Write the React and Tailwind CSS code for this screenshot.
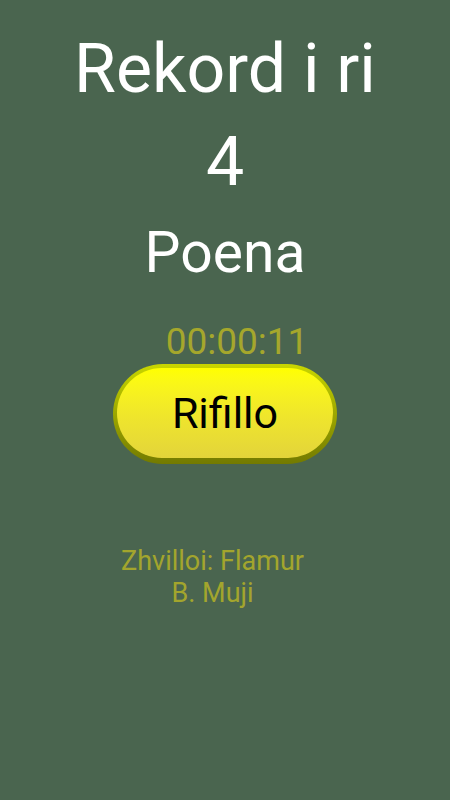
import React from 'react';

const font = {fontFamily: 'Roboto, "Noto Sans", sans-serif'};

export default function App() {
    return (
        <div className="w-full h-[800px] bg-[#4a654f] flex flex-col items-center" style={font}>
            {/* Titulli */}
            <h1 className="mt-[35px] text-[68px] leading-none text-white">Rekord i ri</h1>
            <div className="mt-[25px] text-[68px] leading-none text-white">4</div>
            <div className="mt-[28px] text-[57px] leading-none text-white">Poena</div>

            {/* Koha */}
            <div className="mt-[42px] w-full flex justify-center pl-[24px]">
                <span className="text-[37px] leading-none text-[#a5a72c]">00:00:11</span>
            </div>

            {/* Butoni */}
            <button className="mt-[4px] w-[224px] h-[100px] rounded-[50px] p-[4px] pb-[6px] bg-gradient-to-b from-[#c9d600] to-[#737a00]">
                <span className="w-full h-full rounded-[46px] flex items-center justify-center bg-gradient-to-b from-[#ffff00] via-[#f0e72a] to-[#e3d43a] text-black text-[43px] leading-none">
                    Rifillo
                </span>
            </button>

            {/* Autori */}
            <div className="mt-[81px] w-full flex justify-center pr-[25px]">
                <p className="w-[200px] text-center text-[27px] leading-[32px] text-[#a3a52d]">
                    Zhvilloi: Flamur B. Muji
                </p>
            </div>
        </div>
    );
}
